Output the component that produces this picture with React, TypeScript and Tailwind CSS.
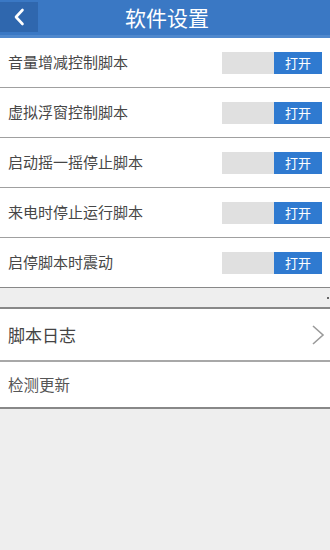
import React from 'react';

const FONT = { fontFamily: '"Noto Sans CJK SC", "Noto Sans", sans-serif' };

const TOGGLES = ['音量增减控制脚本', '虚拟浮窗控制脚本', '启动摇一摇停止脚本', '来电时停止运行脚本', '启停脚本时震动'];

const Toggle: React.FC = () => (
  <div className="flex w-[100px] h-[22px] bg-[#e0e0e0]">
    <div className="flex-1" />
    <div className="w-[48px] h-full bg-[#2f7ad0] flex items-center justify-center text-white text-[13px] leading-none">
      打开
    </div>
  </div>
);

export default function App() {
  return (
    <div className="w-[330px] h-[550px] bg-[#eeeeee] overflow-hidden" style={FONT}>
      {/* Header */}
      <div className="h-[38px] bg-[#3a78c4] border-b-[3px] border-[#4f88cd] relative flex items-center justify-center">
        <div className="absolute left-0 top-[2px] w-[38px] h-[30px] bg-[#2f67ae] flex items-center justify-center">
          <svg width="12" height="18" viewBox="0 0 12 18" fill="none">
            <path d="M9.5 2 L3 9 L9.5 16" stroke="white" strokeWidth="2.6" strokeLinecap="round" strokeLinejoin="round" />
          </svg>
        </div>
        <span className="text-white text-[21px] leading-none ml-[4px]">软件设置</span>
      </div>

      {/* Toggle rows */}
      <div className="bg-white">
        {TOGGLES.map((label, i) => (
          <div
            key={label}
            className={`h-[50px] flex items-center justify-between pl-[8px] pr-[8px] border-b-[1.5px] ${i === TOGGLES.length - 1 ? 'border-[#888888]' : 'border-[#a0a0a0]'}`}
          >
            <span className="text-[15px] text-[#474747]">{label}</span>
            <Toggle />
          </div>
        ))}
      </div>

      {/* Gap band */}
      <div className="h-[19px] bg-[#eeeeee] relative">
        <span className="absolute right-[1px] top-[9px] w-[2px] h-[2px] bg-[#666666]" />
      </div>

      <div className="bg-white border-t-2 border-[#888888]">
        <div className="h-[53px] flex items-center justify-between pl-[8px] pr-[5px] border-b-2 border-[#a8a8a8]">
          <span className="text-[17px] text-[#444444]">脚本日志</span>
          <svg width="14" height="22" viewBox="0 0 14 22" fill="none">
            <path d="M2 2 L12 11 L2 20" stroke="#9a9a9a" strokeWidth="1.6" strokeLinejoin="miter" />
          </svg>
        </div>
        <div className="h-[47px] flex items-center pl-[8px] border-b-2 border-[#888888]">
          <span className="text-[15.5px] text-[#555555]">检测更新</span>
        </div>
      </div>
    </div>
  );
}
